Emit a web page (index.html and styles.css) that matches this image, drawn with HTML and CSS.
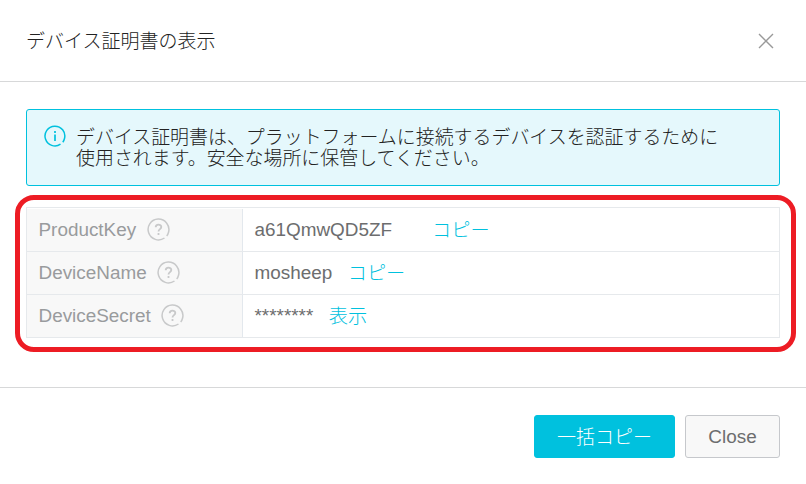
FILE: index.html
```html
<!DOCTYPE html>
<html lang="ja">
<head>
<meta charset="utf-8">
<title>デバイス証明書の表示</title>
<link rel="stylesheet" href="styles.css">
</head>
<body>
<svg class="defs" aria-hidden="true">
  <symbol id="help" viewBox="0 0 23 23">
    <path d="M17.5 20A10.4 10.4 0 1 1 21.6 14Q21 16.5 19.7 18"/>
    <path stroke-width="1.8" d="M8.7 9.3C8.7 5.9 14.3 5.9 14.3 9.1C14.3 11.1 11.5 11.2 11.5 13.5M11.5 15V17"/>
  </symbol>
</svg>
<div class="dialog">
  <header class="header">
    <h1 class="title">デバイス証明書の表示</h1>
    <svg class="close-icon" viewBox="0 0 16 16"><path d="M1 1L15 15M15 1L1 15"/></svg>
  </header>
  <main class="body">
    <div class="notice">
      <svg class="info-icon" viewBox="0 0 22 22">
        <path d="M16.5 19.2A9.9 9.9 0 1 1 20.5 13.5Q20 15.7 18.8 17.2"/>
        <path class="info-mark" d="M11 6V8M11 9.5V16"/>
      </svg>
      <p class="notice-text">デバイス証明書は、プラットフォームに接続するデバイスを認証するために<br>使用されます。安全な場所に保管してください。</p>
    </div>
    <div class="details">
      <div class="row">
        <div class="label">ProductKey<svg class="help"><use href="#help"/></svg></div>
        <div class="value">a61QmwQD5ZF<a class="link link-far">コピー</a></div>
      </div>
      <div class="row">
        <div class="label">DeviceName<svg class="help"><use href="#help"/></svg></div>
        <div class="value">mosheep<a class="link">コピー</a></div>
      </div>
      <div class="row">
        <div class="label">DeviceSecret<svg class="help"><use href="#help"/></svg></div>
        <div class="value">********<a class="link">表示</a></div>
      </div>
      <div class="highlight"></div>
    </div>
  </main>
  <footer class="footer">
    <button class="button primary">一括コピー</button>
    <button class="button">Close</button>
  </footer>
</div>
</body>
</html>
```
FILE: styles.css
```css
* { box-sizing: border-box; }
body {
  margin: 0;
  background: #fff;
  color: #222;
  font: 19px/21px "Liberation Sans", "Noto Sans CJK JP", sans-serif;
}
.defs { display: none; }
.dialog { height: 484px; display: flex; flex-direction: column; }
.header {
  height: 82px;
  padding: 0 32px 0 26px;
  border-bottom: 1px solid #d7d8d9;
  display: flex;
  align-items: center;
  justify-content: space-between;
}
.title { margin: 0; padding-bottom: 2px; font-size: 19px; font-weight: 300; font-family: "Noto Sans CJK JP", sans-serif; }
.close-icon { width: 16px; height: 16px; fill: none; stroke: #999; stroke-width: 1.4; }
.body { height: 305px; padding: 27px 26px 0; }
.notice {
  height: 77px;
  padding: 15px 17px;
  border: 1px solid #00c1de;
  border-radius: 3px;
  background: #e5f8fc;
  display: flex;
  gap: 10px;
}
.info-icon { flex: none; width: 22px; height: 22px; fill: none; stroke: #00c1de; stroke-width: 1.5; }
.info-mark { stroke-width: 1.7; }
.notice-text {
  margin: 0;
  font: 300 18.94px/21px "Noto Sans CJK JP", sans-serif;
  white-space: nowrap;
}
.details {
  position: relative;
  margin-top: 21px;
  padding-top: 1px;
  border: solid #e6e9ec;
  border-width: 1px 1px 0;
}
.row { height: 43px; border-bottom: 1px solid #e6e9ec; display: flex; }
.label {
  width: 216px;
  padding: 0 0 2px 11.5px;
  border-right: 1px solid #e3e8ed;
  background: #f8f8f8;
  color: #999b9d;
  font-size: 18.9px;
  display: flex;
  align-items: center;
  gap: 10.5px;
}
.help { width: 23px; height: 23px; fill: none; stroke: #c8c9ca; stroke-width: 1.5; }
.value { padding: 0 0 2px 11.5px; color: #6c6d6e; font-size: 18.9px; display: flex; align-items: center; }
.link { margin-left: 15.5px; color: #00c1de; font-size: 19.2px; font-weight: 300; font-family: "Noto Sans CJK JP", sans-serif; }
.link-far { margin-left: 40px; }
.highlight {
  position: absolute;
  inset: -13px -17px -14px -12px;
  border: 5px solid #ed1c24;
  border-radius: 19px;
}
.footer {
  flex: 1;
  padding: 27px 26px 0;
  border-top: 1px solid #d7d8d9;
  display: flex;
  justify-content: flex-end;
  align-items: flex-start;
  gap: 10px;
}
.button {
  width: 95px;
  height: 43px;
  padding: 0;
  border: 1px solid #c6c8cc;
  border-radius: 3px;
  background: #f8f8f8;
  color: #6c6d6e;
  font: 18.9px/21px "Liberation Sans", sans-serif;
}
.primary {
  width: 141px;
  padding-bottom: 2px;
  border-color: #00c1de;
  background: #00c1de;
  color: #fff;
  font: 300 19px/21px "Noto Sans CJK JP", sans-serif;
}
```
